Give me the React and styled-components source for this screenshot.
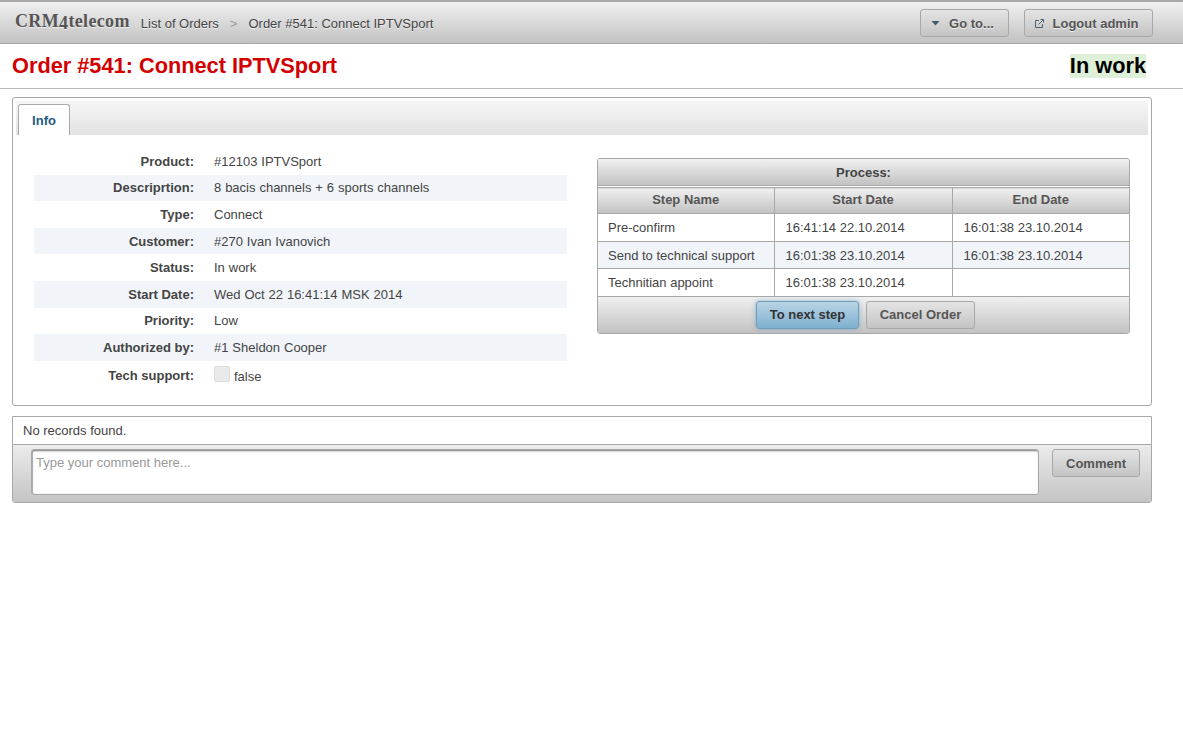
import styled, { createGlobalStyle } from 'styled-components';

const GlobalStyle = createGlobalStyle`
  html, body {
    margin: 0;
    padding: 0;
    background: #fff;
    color: #444;
    font-family: "Liberation Sans", Arial, sans-serif;
    font-size: 13px;
  }
  * { box-sizing: border-box; }
`;

const barGradient = 'linear-gradient(to bottom, #f0f0f0, #c2c2c2)';
const buttonGradient = 'linear-gradient(to bottom, #e4e4e4, #c4c4c4)';

const details = [
  ['Product:', '#12103 IPTVSport'],
  ['Descriprtion:', '8 bacis channels + 6 sports channels'],
  ['Type:', 'Connect'],
  ['Customer:', '#270 Ivan Ivanovich'],
  ['Status:', 'In work'],
  ['Start Date:', 'Wed Oct 22 16:41:14 MSK 2014'],
  ['Priority:', 'Low'],
  ['Authorized by:', '#1 Sheldon Cooper'],
];

const steps = [
  ['Pre-confirm', '16:41:14 22.10.2014', '16:01:38 23.10.2014'],
  ['Send to technical support', '16:01:38 23.10.2014', '16:01:38 23.10.2014'],
  ['Technitian appoint', '16:01:38 23.10.2014', ''],
];

const App = () => (
  <>
    <GlobalStyle />
    <TopBar>
      <Logo>CRM<LogoDigit>4</LogoDigit>telecom</Logo>
      <Crumb>List of Orders</Crumb>
      <CrumbSep>&gt;</CrumbSep>
      <Crumb>Order #541: Connect IPTVSport</Crumb>
      <TopActions>
        <TopButton $width={89}>
          <svg width="9" height="5" viewBox="0 0 9 5">
            <path d="M0.5 0h8L4.5 4.5z" fill="#3f5d70" />
          </svg>
          Go to...
        </TopButton>
        <TopButton $width={129}>
          <svg width="9" height="9" viewBox="0 0 9 9" fill="none" stroke="#4a6272" strokeWidth="1">
            <path d="M4 1.5H.5v7h7V5" />
            <path d="M3.5 5.5 8 1M5.5.5h3v3" />
          </svg>
          Logout admin
        </TopButton>
      </TopActions>
    </TopBar>

    <TitleRow>
      <PageTitle>Order #541: Connect IPTVSport</PageTitle>
      <StatusBadge>In work</StatusBadge>
    </TitleRow>

    <Content>
      <TabPanel>
        <TabNav>
          <Tab>Info</Tab>
        </TabNav>
        <TabBody>
          <DetailList>
            {details.map(([label, value], i) => (
              <DetailRow key={label} $striped={i % 2 === 1}>
                <DetailLabel>{label}</DetailLabel>
                <DetailValue>{value}</DetailValue>
              </DetailRow>
            ))}
            <DetailRow $tall>
              <DetailLabel>Tech support:</DetailLabel>
              <CheckValue>
                <FakeCheckbox />
                false
              </CheckValue>
            </DetailRow>
          </DetailList>

          <ProcessBox>
            <ProcessTitle>Process:</ProcessTitle>
            <ProcessTable>
              <colgroup>
                <col style={{ width: 176 }} />
                <col style={{ width: 178 }} />
                <col />
              </colgroup>
              <thead>
                <tr>
                  <HeadCell>Step Name</HeadCell>
                  <HeadCell>Start Date</HeadCell>
                  <HeadCell>End Date</HeadCell>
                </tr>
              </thead>
              <tbody>
                {steps.map((step, i) => (
                  <StepRow key={step[0]} $striped={i % 2 === 1}>
                    {step.map((cell, c) => (
                      <StepCell key={c} $lower={i === 1}>{cell}</StepCell>
                    ))}
                  </StepRow>
                ))}
              </tbody>
            </ProcessTable>
            <ProcessFooter>
              <ActionButton $primary $width={103}>To next step</ActionButton>
              <ActionButton $width={109}>Cancel Order</ActionButton>
            </ProcessFooter>
          </ProcessBox>
        </TabBody>
      </TabPanel>

      <CommentPanel>
        <NoRecords>No records found.</NoRecords>
        <CommentBar>
          <CommentInput placeholder="Type your comment here..." />
          <CommentButton>Comment</CommentButton>
        </CommentBar>
      </CommentPanel>
    </Content>
  </>
);

const TopBar = styled.header`
  height: 44px;
  display: flex;
  align-items: center;
  padding: 1px 30px 0 15px;
  background: ${barGradient};
  border-top: 2px solid #a8a8a8;
  border-bottom: 1px solid #a8a8a8;
`;

const Logo = styled.span`
  font-family: "Liberation Serif", Georgia, serif;
  font-weight: bold;
  font-size: 18px;
  letter-spacing: 0.35px;
  color: #555;
  margin-right: 11px;
  margin-top: -2px;
  text-shadow: 0 1px 0 #eee;
`;

const LogoDigit = styled.span`
  vertical-align: -2px;
`;

const Crumb = styled.span`
  color: #444;
  text-shadow: 0 1px 0 #eee;
`;

const CrumbSep = styled.span`
  color: #999;
  margin: 0 11px;
`;

const TopActions = styled.div`
  margin-left: auto;
  margin-top: -1px;
  display: flex;
  gap: 15px;
`;

const TopButton = styled.button`
  width: ${(p) => p.$width}px;
  height: 28px;
  padding: 1px 4px 0 0;
  display: flex;
  align-items: center;
  justify-content: center;
  gap: 9px;
  font: bold 13px "Liberation Sans", Arial, sans-serif;
  color: #555;
  text-shadow: 0 1px 0 #eee;
  background: ${buttonGradient};
  border: 1px solid #a8a8a8;
  border-radius: 3px;
`;

const TitleRow = styled.div`
  height: 45px;
  display: flex;
  align-items: center;
  justify-content: space-between;
  padding: 0 37px 0 12px;
  border-bottom: 1px solid #bbb;
`;

const PageTitle = styled.h1`
  margin: 0;
  font-size: 21.75px;
  font-weight: bold;
  color: #d20000;
`;

const StatusBadge = styled.span`
  font-size: 21.75px;
  line-height: 24px;
  font-weight: bold;
  color: #000;
  background: #dff0d8;
`;

const Content = styled.main`
  width: 1140px;
  margin: 8px 0 0 12px;
`;

const TabPanel = styled.section`
  height: 309px;
  padding: 3px;
  border: 1px solid #a8a8a8;
  border-radius: 3px;
`;

const TabNav = styled.div`
  height: 34px;
  padding: 3px 0 0 2px;
  display: flex;
  background: linear-gradient(to bottom, #f6f6f6, #e2e2e2);
`;

const Tab = styled.div`
  width: 52px;
  height: 31px;
  display: flex;
  align-items: center;
  justify-content: center;
  font-weight: bold;
  color: #1f5a85;
  background: #fff;
  border: 1px solid #aaa;
  border-bottom: none;
  border-radius: 3px 3px 0 0;
`;

const TabBody = styled.div`
  display: flex;
  align-items: flex-start;
  gap: 30px;
  padding: 13px 0 0 18px;
`;

const DetailList = styled.div`
  width: 533px;
`;

const DetailRow = styled.div`
  height: ${(p) => (p.$tall ? 30 : 26.6)}px;
  display: flex;
  align-items: center;
  background: ${(p) => (p.$striped ? '#f1f4f9' : 'transparent')};
`;

const DetailLabel = styled.span`
  width: 160px;
  text-align: right;
  font-weight: bold;
`;

const DetailValue = styled.span`
  margin-left: 20px;
  word-spacing: 0.3px;
`;

const CheckValue = styled(DetailValue)`
  display: flex;
  align-items: flex-end;
  gap: 4px;
  margin-top: -2px;
`;

const FakeCheckbox = styled.span`
  width: 16px;
  height: 16px;
  margin-bottom: 2px;
  background: #eaeaea;
  border: 1px solid #ddd;
  border-radius: 2px;
`;

const ProcessBox = styled.div`
  width: 533px;
  margin-top: 10px;
  border: 1px solid #a8a8a8;
  border-radius: 3px;
  overflow: hidden;
`;

const ProcessTitle = styled.div`
  height: 27px;
  display: flex;
  align-items: center;
  justify-content: center;
  font-weight: bold;
  background: ${barGradient};
  border-bottom: 1px solid #a8a8a8;
`;

const ProcessTable = styled.table`
  width: 100%;
  table-layout: fixed;
  border-collapse: collapse;
  margin-top: 1px;
`;

const HeadCell = styled.th`
  height: 26px;
  padding: 0 0 2px;
  font-size: 13px;
  color: #555;
  background: ${barGradient};
  border-top: 1px solid #a8a8a8;
  border-bottom: 1px solid #a8a8a8;
  & + & { border-left: 1px solid #a8a8a8; }
`;

const StepRow = styled.tr`
  background: ${(p) => (p.$striped ? '#f1f4f9' : '#fff')};
`;

const StepCell = styled.td`
  height: 27.5px;
  padding: ${(p) => (p.$lower ? 1 : 0)}px 10px 0;
  border-bottom: 1px solid #a8a8a8;
  & + & {
    padding-left: 11px;
    border-left: 1px solid #a8a8a8;
  }
`;

const ProcessFooter = styled.div`
  height: 36px;
  display: flex;
  align-items: center;
  justify-content: center;
  gap: 7px;
  padding-left: 4px;
  background: ${barGradient};
`;

const ActionButton = styled.button`
  width: ${(p) => p.$width}px;
  height: 28px;
  padding: 0;
  font: bold 13px "Liberation Sans", Arial, sans-serif;
  color: ${(p) => (p.$primary ? '#333' : '#555')};
  background: ${(p) => (p.$primary ? 'linear-gradient(to bottom, #b9d4e6, #7fb0cf)' : buttonGradient)};
  border: 1px solid ${(p) => (p.$primary ? '#6f9db9' : '#a8a8a8')};
  border-radius: 3px;
  box-shadow: ${(p) => (p.$primary ? '0 0 5px rgba(90, 150, 190, 0.6)' : 'none')};
`;

const CommentPanel = styled.section`
  margin-top: 10px;
  border: 1px solid #a8a8a8;
  border-radius: 0 0 3px 3px;
`;

const NoRecords = styled.div`
  height: 28px;
  display: flex;
  align-items: center;
  padding-left: 10px;
  border-bottom: 1px solid #a8a8a8;
`;

const CommentBar = styled.div`
  height: 57px;
  display: flex;
  align-items: flex-start;
  gap: 13px;
  padding: 4px 11px 0 18px;
  background: linear-gradient(to bottom, #ececec, #c4c4c4);
`;

const CommentInput = styled.textarea`
  width: 1008px;
  height: 46px;
  padding: 5px 4px;
  resize: none;
  outline: none;
  font: 13px "Liberation Sans", Arial, sans-serif;
  background: #fff;
  border: 1px solid #a8a8a8;
  border-radius: 3px;
  box-shadow: inset 0 2px 2px -1px #777, inset 1px 0 1px 0 #aaa;
  &::placeholder { color: #999; opacity: 1; }
`;

const CommentButton = styled.button`
  width: 88px;
  height: 28px;
  padding: 0;
  font: bold 13px "Liberation Sans", Arial, sans-serif;
  color: #555;
  background: ${buttonGradient};
  border: 1px solid #a8a8a8;
  border-radius: 3px;
`;

export default App;
